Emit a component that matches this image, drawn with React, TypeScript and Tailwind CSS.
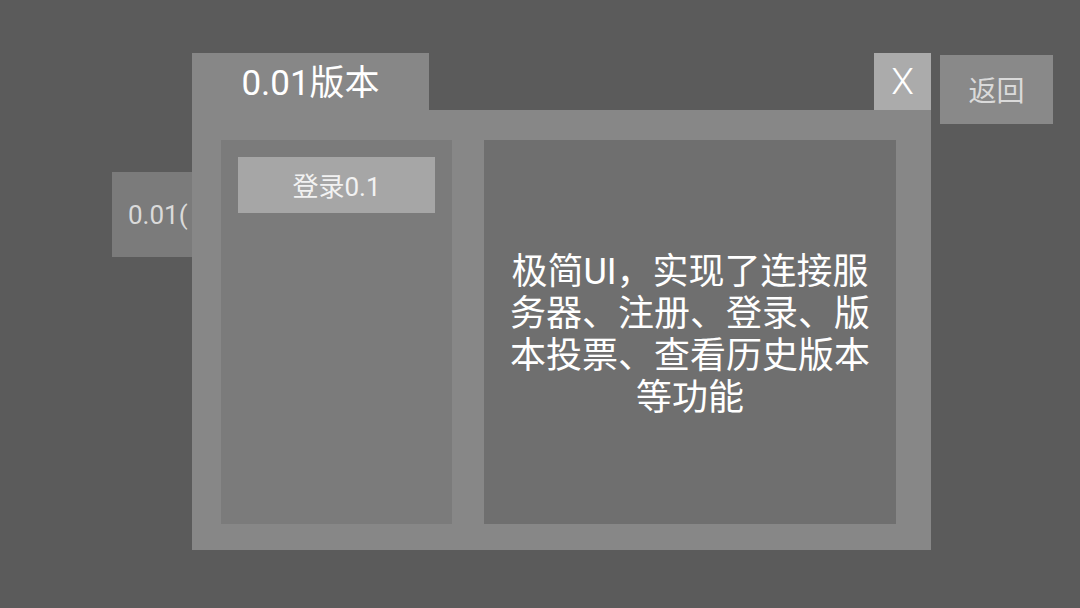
import React from 'react';

const font = { fontFamily: 'Roboto, "Noto Sans CJK SC", sans-serif' };

const VersionWindow: React.FC = () => {
    return (
        <div className="mt-[53px] flex w-[739px] flex-col">
            <div className="flex h-[57px] items-stretch">
                <div className="flex w-[237px] items-center justify-center bg-[#878787] pt-[4px] text-[35px] leading-none text-white">
                    0.01版本
                </div>
                <div className="flex-1" />
                <button className="flex w-[57px] items-center justify-center bg-[#ababab] text-[37px] font-light leading-none text-white">
                    X
                </button>
            </div>
            <div className="flex h-[440px] bg-[#878787] pb-[26px] pl-[29px] pr-[35px] pt-[30px]">
                <div className="flex w-[231px] flex-col bg-[#7b7b7b] px-[17px] pt-[17px]">
                    <button className="flex h-[56px] items-center justify-center bg-[#a6a6a6] pt-[3px] text-[26px] leading-none text-[#f2f2f2]">
                        登录0.1
                    </button>
                </div>
                <div className="ml-[32px] flex flex-1 items-center justify-center bg-[#6f6f6f] pt-[6px]">
                    <p className="w-[372px] text-center text-[36px] leading-[42px] text-white">
                        极简UI，实现了连接服务器、注册、登录、版本投票、查看历史版本等功能
                    </p>
                </div>
            </div>
        </div>
    );
};

export default function App() {
    return (
        <div className="flex h-[608px] w-[1080px] overflow-hidden bg-[#5b5b5b]" style={font}>
            <div className="ml-[112px] mt-[172px] flex h-[85px] w-[80px] items-center overflow-hidden bg-[#7b7b7b] pl-[16px]">
                <span className="whitespace-nowrap text-[26px] leading-none text-[#dadada]">0.01(</span>
            </div>
            <VersionWindow />
            <button className="ml-[9px] mt-[55px] flex h-[69px] w-[113px] items-center justify-center bg-[#898989] pt-[4px] text-[28px] leading-none text-[#dadada]">
                返回
            </button>
        </div>
    );
}
